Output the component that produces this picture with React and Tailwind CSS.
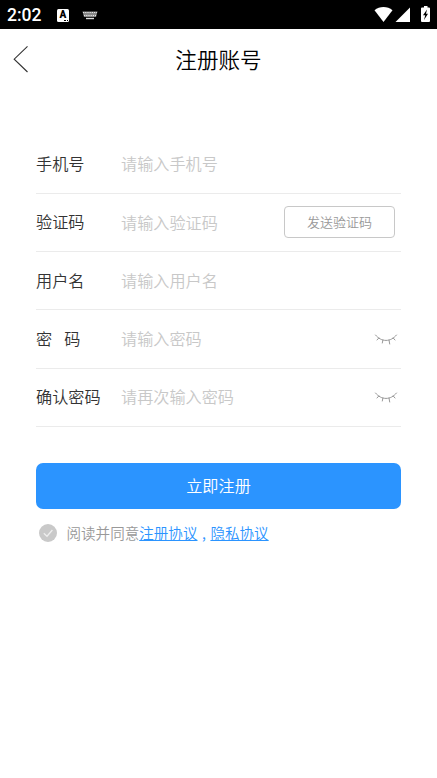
import React, { useState } from "react";

function StatusBar() {
  return (
    <div className="h-[29px] bg-black text-white flex items-center justify-between px-[7px]">
      <div className="flex items-center">
        <span className="w-[50px] font-['Roboto',sans-serif] font-medium text-[17.5px] leading-none pt-[2px]">
          2:02
        </span>
        <span className="relative w-[12px] h-[13px] mt-[1px] rounded-[1.5px] bg-white text-black font-['Roboto',sans-serif] font-black text-[10px] leading-[12px] text-center">
          A
          <span className="absolute right-[1px] bottom-[1px] w-[4px] border-b border-dotted border-black" />
        </span>
        <svg className="ml-[13px] mt-[1px]" width="16" height="9" viewBox="0 0 16 9">
          <path d="M0.5 0.5h15L14 6H2Z" fill="#888" />
          <path
            d="M1 1.5h14M2 4.5h12"
            stroke="#e5e5e5"
            strokeWidth="1"
            strokeDasharray="1.2 1"
          />
          <path d="M4 7.5h8" stroke="#ddd" strokeWidth="1.4" />
        </svg>
      </div>
      <svg width="56" height="18" viewBox="0 0 56 18" fill="#fff">
        <path d="M0.5 4.2C5.5-.1 13.5-.1 18.5 4.2L9.5 16Z" />
        <path d="M21.5 16H36V1.5Z" />
        <path d="M48 1.5H50V0h3.5v1.5h1.5a1 1 0 0 1 1 1v12.5a1 1 0 0 1-1 1h-7a1 1 0 0 1-1-1V2.5a1 1 0 0 1 1-1Z" />
        <path d="M53 3.5L49 9.2h2.2L50 14L54 7.8h-2Z" fill="#000" />
      </svg>
    </div>
  );
}

function ClosedEye() {
  return (
    <svg
      width="24"
      height="12"
      viewBox="0 0 24 12"
      fill="none"
      stroke="#999"
      strokeWidth="1"
      strokeLinecap="round"
    >
      <path d="M1.5 1C4.5 4.6 8 6.4 12 6.4S19.5 4.6 22.5 1" />
      <path d="M4.8 4L3 6M8.9 6L8.3 9M15 6L15.7 10M19.2 4L21 6" />
    </svg>
  );
}

function Field({ label, placeholder, type = "text", children }) {
  return (
    <div className="h-[58.3px] flex items-center border-b border-[#ebebeb]">
      <label className="w-[85px] shrink-0 pb-[2px] text-[#333] whitespace-pre">{label}</label>
      <input
        type={type}
        placeholder={placeholder}
        className="flex-1 min-w-0 h-8 pb-[2px] outline-none bg-transparent placeholder:text-[#c8c8c8]"
      />
      {children}
    </div>
  );
}

export default function App() {
  const [agreed, setAgreed] = useState(false);

  return (
    <div className="min-h-screen bg-white font-['Noto_Sans_CJK_SC',sans-serif] font-[350] text-[16.15px]">
      <StatusBar />

      <header className="h-[60px] grid grid-cols-[60px_1fr_60px] items-center">
        <button aria-label="返回" className="pl-[13px]">
          <svg width="16" height="28" viewBox="0 0 16 28" fill="none" stroke="#333" strokeWidth="1.1">
            <path d="M14.5 1.3L1.2 14.2L14.5 27" />
          </svg>
        </button>
        <h1 className="pb-[1px] text-center text-[21.6px] leading-none text-black">注册账号</h1>
      </header>

      <form className="mt-[46.6px] px-9" onSubmit={(e) => e.preventDefault()}>
        <Field label="手机号" placeholder="请输入手机号" />
        <Field label="验证码" placeholder="请输入验证码">
          <button
            type="button"
            className="w-[111px] h-[32px] mr-[6px] mb-[1px] pb-[1px] border border-[#c8c8c8] rounded-[4px] text-[13px] leading-none text-[#999]"
          >
            发送验证码
          </button>
        </Field>
        <Field label="用户名" placeholder="请输入用户名" />
        <Field
          label={<>密<span className="ml-[12px]">码</span></>}
          placeholder="请输入密码"
          type="password"
        >
          <span className="mr-[3px] pt-[2px]">
            <ClosedEye />
          </span>
        </Field>
        <Field label="确认密码" placeholder="请再次输入密码" type="password">
          <span className="mr-[3px] pt-[2px]">
            <ClosedEye />
          </span>
        </Field>

        <button
          type="submit"
          className="mt-[36px] block w-full h-[46px] pb-[2px] rounded-[7px] bg-[#2b94ff] text-white leading-none"
        >
          立即注册
        </button>

        <div className="mt-[13px] pl-[3px] flex items-center text-[14.55px] leading-[22px] text-[#999]">
          <button
            type="button"
            aria-label="同意"
            onClick={() => setAgreed(!agreed)}
            className={agreed ? "text-[#2b94ff]" : "text-[#c9c9c9]"}
          >
            <svg width="18" height="18" viewBox="0 0 18 18">
              <circle cx="9" cy="9" r="9" fill="currentColor" />
              <path d="M4.8 9.3L8 12.2L13.4 6" fill="none" stroke="#eee" strokeWidth="1.3" />
            </svg>
          </button>
          <span className="ml-[9.5px]">阅读并同意</span>
          <a href="#register" className="text-[#2b94ff] underline">注册协议</a>
          <span className="w-[13px] text-center text-[#2b94ff]">,</span>
          <a href="#privacy" className="text-[#2b94ff] underline">隐私协议</a>
        </div>
      </form>
    </div>
  );
}
